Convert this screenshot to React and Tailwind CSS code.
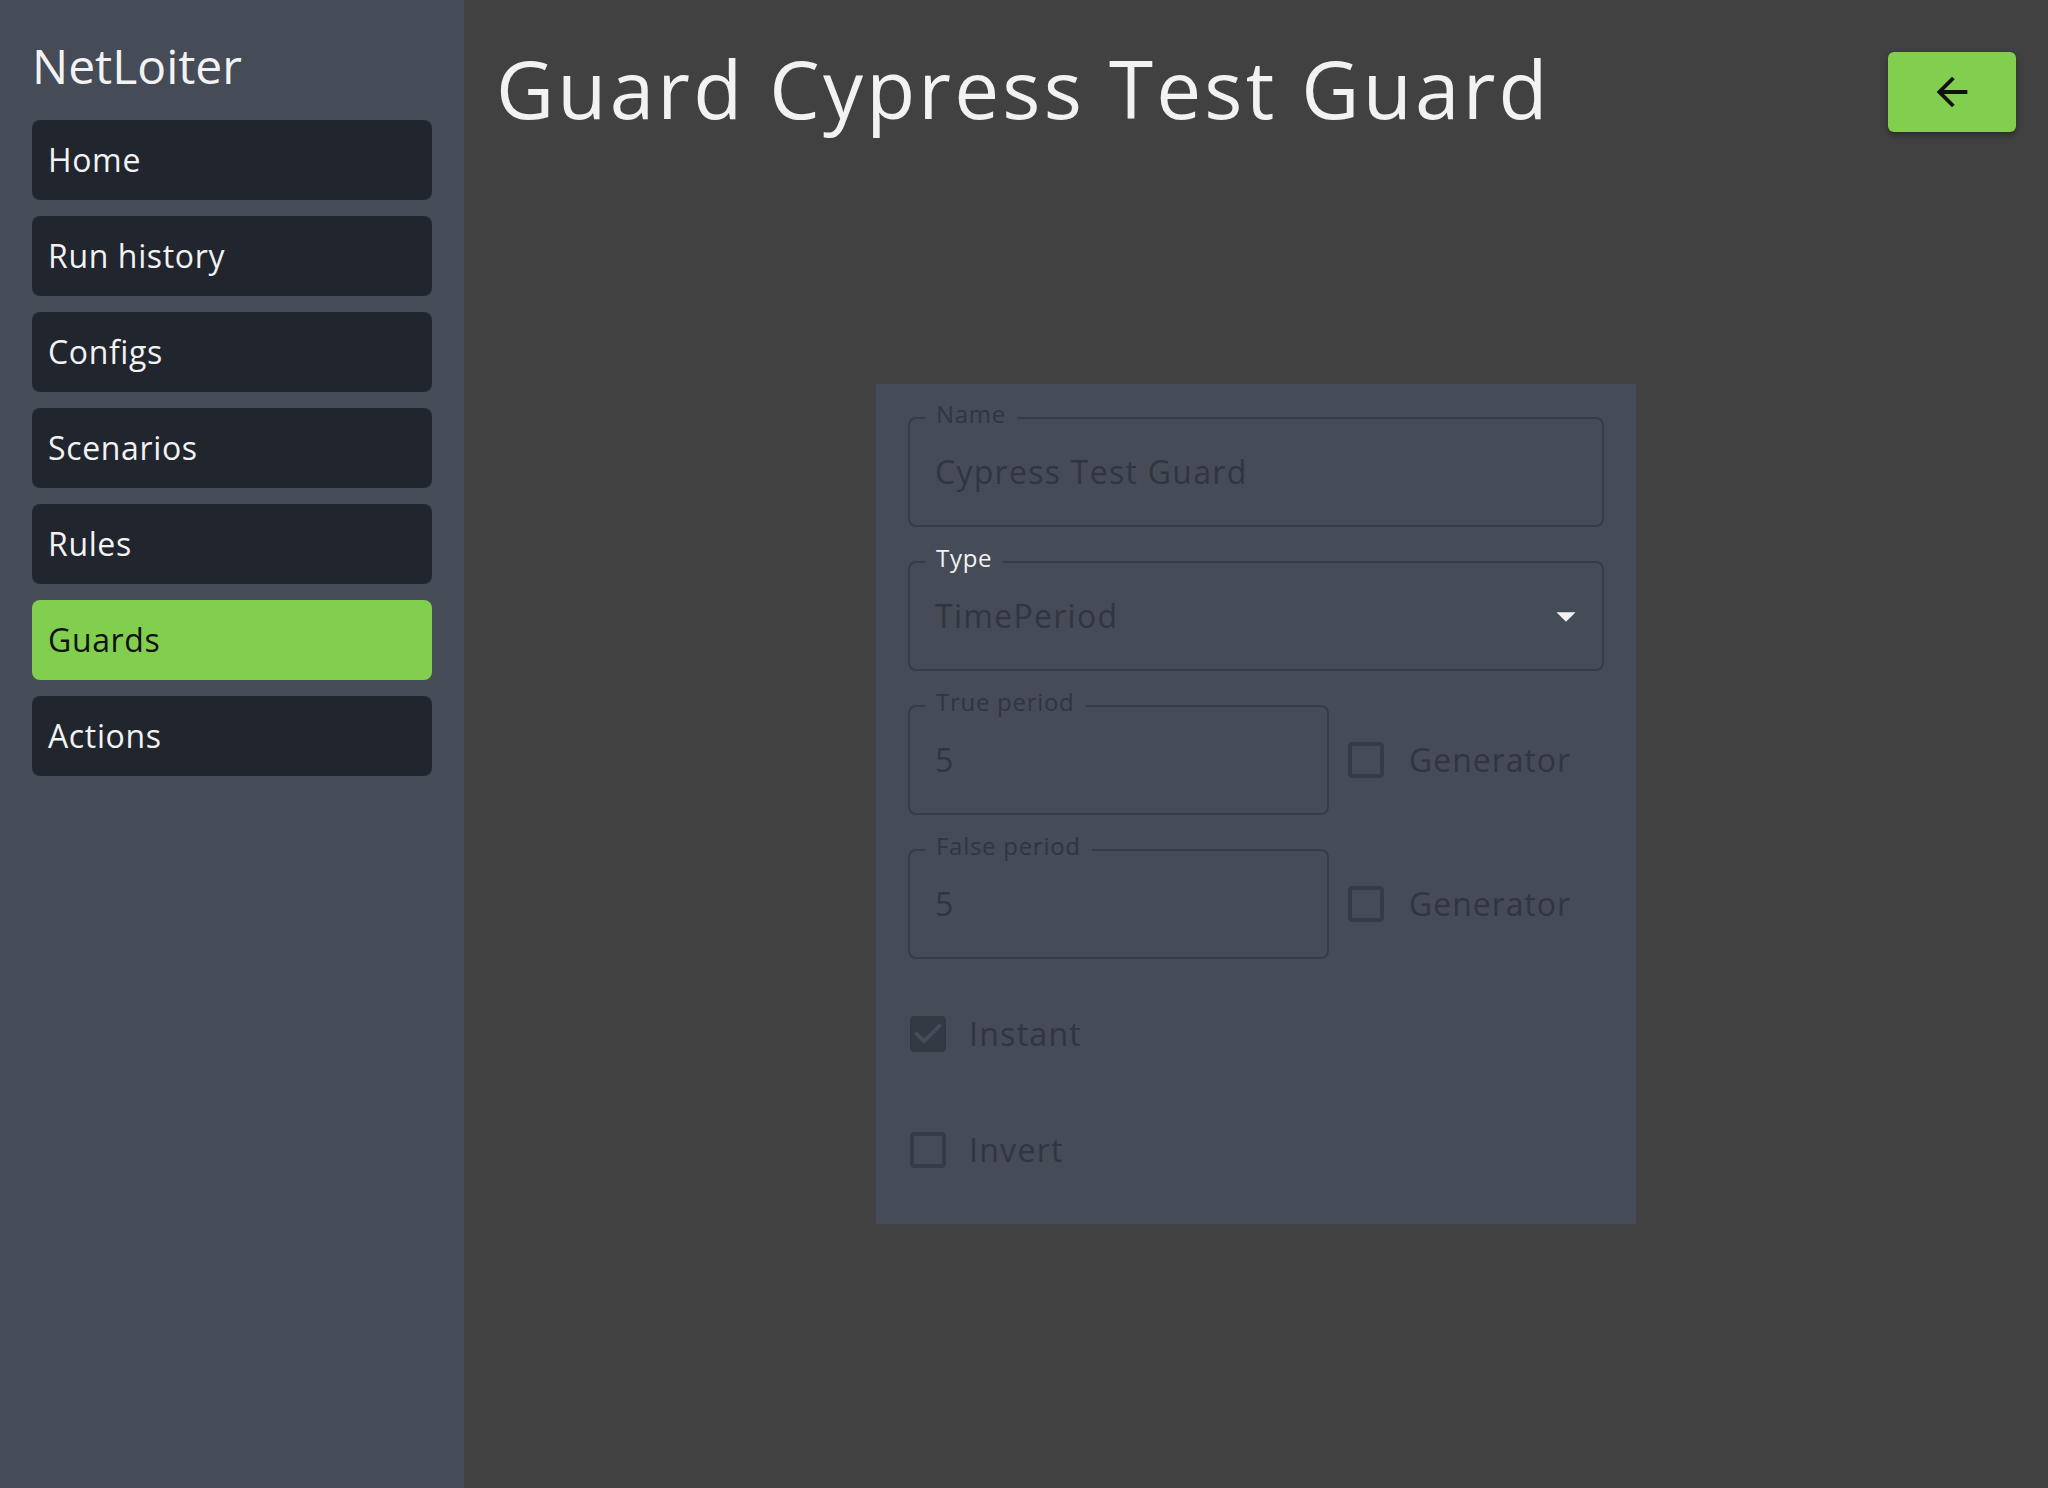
import React from "react";

const FONT = { fontFamily: '"Open Sans", "Liberation Sans", sans-serif' };

function CheckBlank({ className }) {
  return (
    <svg viewBox="0 0 24 24" className={className} fill="currentColor">
      <path d="M19 5v14H5V5h14m0-2H5c-1.1 0-2 .9-2 2v14c0 1.1.9 2 2 2h14c1.1 0 2-.9 2-2V5c0-1.1-.9-2-2-2z" />
    </svg>
  );
}

function CheckFilled({ className }) {
  return (
    <svg viewBox="0 0 24 24" className={className} fill="currentColor">
      <path d="M19 3H5c-1.11 0-2 .9-2 2v14c0 1.1.89 2 2 2h14c1.11 0 2-.9 2-2V5c0-1.1-.89-2-2-2zm-9 14l-5-5 1.41-1.41L10 14.17l7.59-7.59L19 8l-9 9z" />
    </svg>
  );
}

function Field({ label, value, labelLight, width, select }) {
  return (
    <div
      className={`relative h-[110px] border-2 border-[#363c46] rounded-lg flex items-center pl-[25px] pr-[13px] ${width}`}
    >
      <span
        className={`absolute -top-[17px] left-[15px] px-[11px] bg-[#454b57] text-[24px] leading-6 tracking-[0.03em] ${
          labelLight ? "text-[#f2f2f2]" : "text-[#30363f]"
        }`}
      >
        {label}
      </span>
      <span className="flex-1 text-[32px] tracking-[0.04em] text-[#30363f]">{value}</span>
      {select && (
        <svg viewBox="0 0 24 24" className="w-[46px] h-[46px] text-[#f2f2f2]" fill="currentColor">
          <path d="M7 10l5 5 5-5z" />
        </svg>
      )}
    </div>
  );
}

function Generator() {
  return (
    <div className="flex items-center ml-[13px]">
      <CheckBlank className="w-12 h-12 text-[#363c46]" />
      <span className="ml-[19px] text-[32px] tracking-[0.03em] text-[#30363f]">Generator</span>
    </div>
  );
}

export default function App() {
  const nav = ["Home", "Run history", "Configs", "Scenarios", "Rules", "Guards", "Actions"];
  return (
    <div className="flex w-full h-[1488px] bg-[#414141]" style={FONT}>
      <aside className="w-[464px] shrink-0 bg-[#454b57] px-8 pt-[42px]">
        <h2 className="text-[48px] leading-none text-[#f2f2f2] mb-[30px]">NetLoiter</h2>
        <nav className="flex flex-col gap-4">
          {nav.map((n) => (
            <div
              key={n}
              className={`h-20 rounded-lg flex items-center pl-4 text-[32px] tracking-[0.02em] ${
                n === "Guards" ? "bg-[#82cf50] text-[#111]" : "bg-[#20252e] text-[#f2f2f2]"
              }`}
            >
              {n}
            </div>
          ))}
        </nav>
      </aside>
      <main className="flex-1 px-8">
        <header className="flex items-center justify-between h-20 mt-[52px]">
          <h1 className="text-[80px] leading-none tracking-[0.04em] text-[#f2f2f2] pb-[8px]">
            Guard Cypress Test Guard
          </h1>
          <button className="w-32 h-20 rounded-md bg-[#82cf50] flex items-center justify-center shadow-[0_3px_6px_rgba(0,0,0,0.35)]">
            <svg viewBox="0 0 24 24" className="w-[46px] h-[46px] text-[#111]" fill="currentColor">
              <path d="M20 11H7.83l5.59-5.59L12 4l-8 8 8 8 1.41-1.41L7.83 13H20v-2z" />
            </svg>
          </button>
        </header>
        <section className="mx-auto mt-[252px] w-[760px] h-[840px] bg-[#454b57] p-8 pt-[33px] flex flex-col gap-[34px]">
          <Field label="Name" value="Cypress Test Guard" width="w-full" />
          <Field label="Type" value="TimePeriod" labelLight select width="w-full" />
          <div className="flex items-center">
            <Field label="True period" value="5" width="w-[421px]" />
            <Generator />
          </div>
          <div className="flex items-center">
            <Field label="False period" value="5" width="w-[421px]" />
            <Generator />
          </div>
          <div className="h-[82px] flex items-center -ml-1">
            <CheckFilled className="w-12 h-12 text-[#343a44]" />
            <span className="ml-[17px] text-[32px] tracking-[0.04em] text-[#30363f]">Instant</span>
          </div>
          <div className="h-[82px] flex items-center -ml-1">
            <CheckBlank className="w-12 h-12 text-[#363c46]" />
            <span className="ml-[17px] text-[32px] tracking-[0.04em] text-[#30363f]">Invert</span>
          </div>
        </section>
      </main>
    </div>
  );
}
